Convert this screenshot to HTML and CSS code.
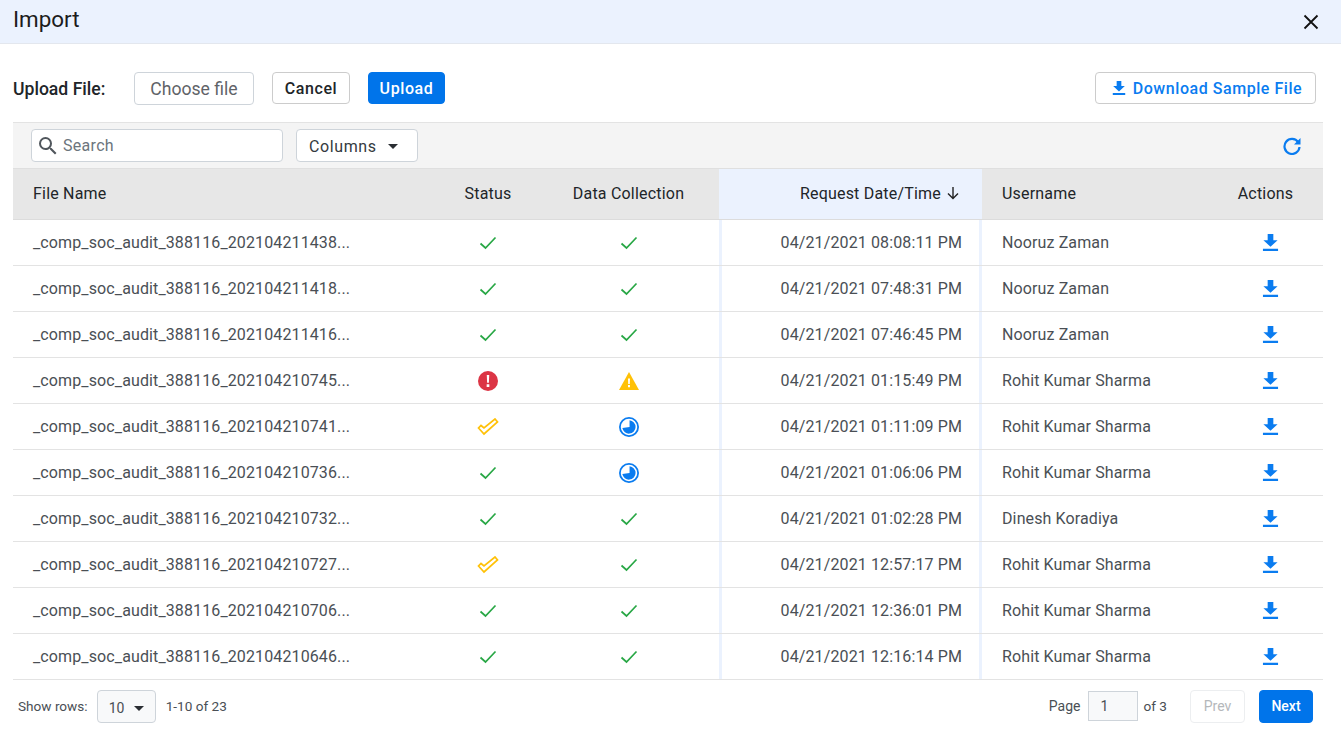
FILE: index.html
```html
<!DOCTYPE html>
<html lang="en">
<head>
<meta charset="utf-8">
<title>Import</title>
<link rel="stylesheet" href="styles.css">
</head>
<body>
<svg class="defs" width="0" height="0" aria-hidden="true">
  <symbol id="dl" viewBox="0 0 18 18"><path d="M6 0h6v6.500h4.500L9 13.500 1.500 6.500H6zM1 15.500h16V18H1z"/></symbol>
  <symbol id="ok" viewBox="0 0 18 14"><path d="M1.500 7.500 6.500 12 16.500 1.500" fill="none" stroke="#28a745" stroke-width="1.700"/></symbol>
  <symbol id="warnc" viewBox="0 0 22 18"><path d="M1.500 10 7 16 20.500 4 18 1 7 10 4 7.500z" fill="none" stroke="#ffc107" stroke-width="1.700"/></symbol>
  <symbol id="err" viewBox="0 0 18 18"><circle cx="9" cy="9" r="9" fill="#dc3545"/><path d="M7.900 3.500h2.200l-.3 7H8.200zM7.800 12h2.400v2.400H7.800z" fill="#fff"/></symbol>
  <symbol id="warn" viewBox="0 0 20 18"><path d="M10 0 20 18H0z" fill="#ffc107"/><path d="M9 6.500h2l-.2 5.500H9.200zM9 13h2v2.200H9z" fill="#fff"/></symbol>
  <symbol id="pend" viewBox="0 0 18 18"><circle cx="9" cy="9" r="8.200" fill="none" stroke="#0a7cf0" stroke-width="1.600"/><path d="M9.500 3a6 6 0 1 1-6.500 7l6.500-1z" fill="#0a7cf0"/></symbol>
</svg>
<header class="title-bar">
  <h1 class="title">Import</h1>
  <svg class="close" viewBox="0 0 16 16" width="16" height="16"><path d="M1.500 1.500l13 13M14.500 1.500l-13 13" stroke="#111" stroke-width="1.800" fill="none"/></svg>
</header>
<section class="upload-row">
  <span class="upload-label">Upload File:</span>
  <button class="btn choose">Choose file</button>
  <button class="btn cancel">Cancel</button>
  <button class="btn primary upload">Upload</button>
  <button class="btn sample"><svg class="sample-icon" width="14" height="14"><use href="#dl"/></svg>Download Sample File</button>
</section>
<main class="grid">
  <div class="toolbar">
    <div class="search">
      <svg viewBox="0 0 24 24" width="24" height="24"><path d="M15.500 14h-.79l-.28-.27A6.470 6.470 0 0 0 16 9.500 6.500 6.500 0 1 0 9.500 16c1.610 0 3.090-.59 4.230-1.570l.27.28v.79l5 4.990L20.490 19l-4.990-5zm-6 0C7.010 14 5 11.990 5 9.500S7.010 5 9.500 5 14 7.010 14 9.500 11.990 14 9.500 14z" fill="#50565c"/></svg>
      <span class="search-text">Search</span>
    </div>
    <button class="columns">Columns<span class="caret"></span></button>
    <svg class="refresh" viewBox="0 0 18 18" width="18" height="18"><path d="M15.200 5.200A7.500 7.500 0 1 0 16.500 10" fill="none" stroke="#0a7cf0" stroke-width="2.200"/><path d="M17.500 1v6.500H11z" fill="#0a7cf0"/></svg>
  </div>
  <div class="row head">
    <div class="cell name">File Name</div>
    <div class="cell center">Status</div>
    <div class="cell center">Data Collection</div>
    <div class="cell date sorted">Request Date/Time<svg class="arrow" viewBox="0 0 14 14" width="14" height="14"><path d="M7 1v11M2 7.500 7 12.500l5-5" fill="none" stroke="#222" stroke-width="1.400"/></svg></div>
    <div class="cell name-user">Username</div>
    <div class="cell center actions-h">Actions</div>
  </div>

  <div class="row">
    <div class="cell name">_comp_soc_audit_388116_202104211438...</div>
    <div class="cell center"><svg class="i-ok"><use href="#ok"/></svg></div>
    <div class="cell center"><svg class="i-ok"><use href="#ok"/></svg></div>
    <div class="cell date">04/21/2021 08:08:11 PM</div>
    <div class="cell name-user">Nooruz Zaman</div>
    <div class="cell center"><svg class="i-dl"><use href="#dl"/></svg></div>
  </div>
  <div class="row">
    <div class="cell name">_comp_soc_audit_388116_202104211418...</div>
    <div class="cell center"><svg class="i-ok"><use href="#ok"/></svg></div>
    <div class="cell center"><svg class="i-ok"><use href="#ok"/></svg></div>
    <div class="cell date">04/21/2021 07:48:31 PM</div>
    <div class="cell name-user">Nooruz Zaman</div>
    <div class="cell center"><svg class="i-dl"><use href="#dl"/></svg></div>
  </div>
  <div class="row">
    <div class="cell name">_comp_soc_audit_388116_202104211416...</div>
    <div class="cell center"><svg class="i-ok"><use href="#ok"/></svg></div>
    <div class="cell center"><svg class="i-ok"><use href="#ok"/></svg></div>
    <div class="cell date">04/21/2021 07:46:45 PM</div>
    <div class="cell name-user">Nooruz Zaman</div>
    <div class="cell center"><svg class="i-dl"><use href="#dl"/></svg></div>
  </div>
  <div class="row">
    <div class="cell name">_comp_soc_audit_388116_202104210745...</div>
    <div class="cell center"><svg class="i-err"><use href="#err"/></svg></div>
    <div class="cell center"><svg class="i-warn"><use href="#warn"/></svg></div>
    <div class="cell date">04/21/2021 01:15:49 PM</div>
    <div class="cell name-user">Rohit Kumar Sharma</div>
    <div class="cell center"><svg class="i-dl"><use href="#dl"/></svg></div>
  </div>
  <div class="row">
    <div class="cell name">_comp_soc_audit_388116_202104210741...</div>
    <div class="cell center"><svg class="i-warnc"><use href="#warnc"/></svg></div>
    <div class="cell center"><svg class="i-err"><use href="#pend"/></svg></div>
    <div class="cell date">04/21/2021 01:11:09 PM</div>
    <div class="cell name-user">Rohit Kumar Sharma</div>
    <div class="cell center"><svg class="i-dl"><use href="#dl"/></svg></div>
  </div>
  <div class="row">
    <div class="cell name">_comp_soc_audit_388116_202104210736...</div>
    <div class="cell center"><svg class="i-ok"><use href="#ok"/></svg></div>
    <div class="cell center"><svg class="i-err"><use href="#pend"/></svg></div>
    <div class="cell date">04/21/2021 01:06:06 PM</div>
    <div class="cell name-user">Rohit Kumar Sharma</div>
    <div class="cell center"><svg class="i-dl"><use href="#dl"/></svg></div>
  </div>
  <div class="row">
    <div class="cell name">_comp_soc_audit_388116_202104210732...</div>
    <div class="cell center"><svg class="i-ok"><use href="#ok"/></svg></div>
    <div class="cell center"><svg class="i-ok"><use href="#ok"/></svg></div>
    <div class="cell date">04/21/2021 01:02:28 PM</div>
    <div class="cell name-user">Dinesh Koradiya</div>
    <div class="cell center"><svg class="i-dl"><use href="#dl"/></svg></div>
  </div>
  <div class="row">
    <div class="cell name">_comp_soc_audit_388116_202104210727...</div>
    <div class="cell center"><svg class="i-warnc"><use href="#warnc"/></svg></div>
    <div class="cell center"><svg class="i-ok"><use href="#ok"/></svg></div>
    <div class="cell date">04/21/2021 12:57:17 PM</div>
    <div class="cell name-user">Rohit Kumar Sharma</div>
    <div class="cell center"><svg class="i-dl"><use href="#dl"/></svg></div>
  </div>
  <div class="row">
    <div class="cell name">_comp_soc_audit_388116_202104210706...</div>
    <div class="cell center"><svg class="i-ok"><use href="#ok"/></svg></div>
    <div class="cell center"><svg class="i-ok"><use href="#ok"/></svg></div>
    <div class="cell date">04/21/2021 12:36:01 PM</div>
    <div class="cell name-user">Rohit Kumar Sharma</div>
    <div class="cell center"><svg class="i-dl"><use href="#dl"/></svg></div>
  </div>
  <div class="row">
    <div class="cell name">_comp_soc_audit_388116_202104210646...</div>
    <div class="cell center"><svg class="i-ok"><use href="#ok"/></svg></div>
    <div class="cell center"><svg class="i-ok"><use href="#ok"/></svg></div>
    <div class="cell date">04/21/2021 12:16:14 PM</div>
    <div class="cell name-user">Rohit Kumar Sharma</div>
    <div class="cell center"><svg class="i-dl"><use href="#dl"/></svg></div>
  </div>

  <footer class="pager">
    <span class="show-label">Show rows:</span>
    <div class="rows-select">10<span class="caret"></span></div>
    <span class="range">1-10 of 23</span>
    <span class="spacer"></span>
    <span class="page-label">Page</span>
    <div class="page-input">1</div>
    <span class="page-of">of 3</span>
    <button class="prev">Prev</button>
    <button class="next">Next</button>
  </footer>
</main>
</body>
</html>
```

FILE: styles.css
```css
* { box-sizing: border-box; }
html, body { margin: 0; padding: 0; }
body {
  width: 1341px;
  height: 740px;
  overflow: hidden;
  background: #fff;
  font-family: Roboto, "Liberation Sans", sans-serif;
  color: #212529;
}
button { font-family: inherit; }
.defs { position: absolute; }

.title-bar {
  height: 44px;
  background: #ebf2fe;
  border-bottom: 1px solid #e3e7ee;
  display: flex;
  align-items: center;
  justify-content: space-between;
  padding: 0 22px 6px 13px;
}
.title { margin: 0; font-size: 22.400px; font-weight: 400; color: #1c1c1c; line-height: 30px; }
.close { margin-top: 7px; }

.upload-row {
  height: 78px;
  padding: 28px 25px 0 13px;
  display: flex;
  align-items: flex-start;
}
.upload-label {
  width: 121px;
  font-size: 17.600px;
  font-weight: 500;
  line-height: 35px;
  color: #212529;
}
.btn {
  height: 32px;
  border-radius: 4px;
  border: 1px solid #ccc;
  background: #fff;
  font-size: 16px;
  padding: 0;
  letter-spacing: .6px;
}
.choose { width: 120px; height: 33px; color: #5f6368; font-size: 17.600px; letter-spacing: 0; margin-right: 18px; border-color: #ced4da; }
.cancel { width: 78px; color: #212529; font-weight: 500; margin-right: 18px; }
.primary { background: #0074ea; border-color: #0074ea; color: #fff; }
.upload { width: 77px; font-weight: 500; }
.sample {
  margin-left: auto;
  width: 221px;
  color: #0a7cf0;
  font-weight: 500;
  display: flex;
  align-items: center;
  justify-content: center;
  gap: 7px;
  letter-spacing: .55px;
  padding-left: 3px;
}
.sample-icon { fill: #0a7cf0; }

.grid { margin: 0 18px 0 13px; }

.toolbar {
  height: 47px;
  background: #f4f4f4;
  border-top: 1px solid #e3e3e3;
  border-bottom: 1px solid #dfdfdf;
  display: flex;
  align-items: flex-start;
  padding: 6px 22px 0 18px;
}
.search {
  width: 252px;
  height: 33px;
  background: #fff;
  border: 1px solid #ced4da;
  border-radius: 4px;
  display: flex;
  align-items: center;
  padding-left: 4px;
  gap: 3px;
}
.search-text { font-size: 16px; color: #6c757d; letter-spacing: .3px; }
.columns {
  width: 122px;
  height: 33px;
  margin-left: 13px;
  background: #fff;
  border: 1px solid #ced4da;
  border-radius: 4px;
  font-size: 16px;
  color: #343a40;
  letter-spacing: .6px;
  display: flex;
  align-items: center;
  padding: 2px 0 0 12px;
}
.caret {
  display: inline-block;
  width: 0;
  height: 0;
  border-left: 5px solid transparent;
  border-right: 5px solid transparent;
  border-top: 5px solid #2a2e33;
  margin-left: 11px;
}
.refresh { margin-left: auto; margin-top: 8px; }

.row {
  display: grid;
  grid-template-columns: 425px 100px 181px 263px 236px 105px;
  height: 46px;
  border-bottom: 1px solid #e3e3e3;
  font-size: 16px;
  color: #4a4f55;
  letter-spacing: .12px;
}
.row.head {
  height: 51px;
  background: #e7e7e7;
  color: #212529;
  letter-spacing: .2px;
  border-bottom-color: #dcdcdc;
}
.row.head .cell { padding-bottom: 2px; }
.cell { display: flex; align-items: center; min-width: 0; white-space: nowrap; }
.center { justify-content: center; }
.name { padding-left: 20px; }
.name-user { padding-left: 20px; }
.date {
  justify-content: flex-end;
  padding-right: 17px;
  border-left: 3px solid #ebf2fe;
  border-right: 3px solid #ebf2fe;
}
.sorted { border: 0; background: #ebf2fe; padding-right: 22px; }
.arrow { margin-left: 5px; }
.actions-h { padding-right: 10px; }

.i-ok { width: 18px; height: 14px; }
.i-dl { width: 17px; height: 17px; fill: #0a7cf0; }
.i-err { width: 20px; height: 20px; }
.i-warn { width: 20px; height: 18px; }
.i-warnc { width: 22px; height: 18px; }

.pager {
  height: 52px;
  display: flex;
  align-items: center;
  padding: 0 10px 0 5px;
  font-size: 13.600px;
  color: #4a4f55;
}
.rows-select {
  width: 59px;
  height: 33px;
  margin-left: 9px;
  background: #f8f9fa;
  border: 1px solid #ced4da;
  border-radius: 4px;
  display: flex;
  align-items: center;
  padding: 4px 0 0 11px;
  font-size: 14px;
}
.rows-select .caret { margin-left: 10px; }
.range { margin-left: 10px; }
.spacer { flex: 1; }
.page-label { font-size: 14px; }
.page-input {
  width: 50px;
  height: 30px;
  margin: 0 6px 0 7px;
  background: #f8f9fa;
  border: 1px solid #ced4da;
  padding-left: 12px;
  display: flex;
  align-items: center;
  font-size: 14px;
}
.prev, .next { height: 33px; border-radius: 4px; font-size: 14px; padding: 0; }
.prev { width: 55px; margin-left: 23px; background: #fff; border: 1px solid #eceef0; color: #b5b8bb; }
.next { width: 54px; margin-left: 14px; background: #0074ea; border: 1px solid #0074ea; color: #fff; font-weight: 500; }
```
